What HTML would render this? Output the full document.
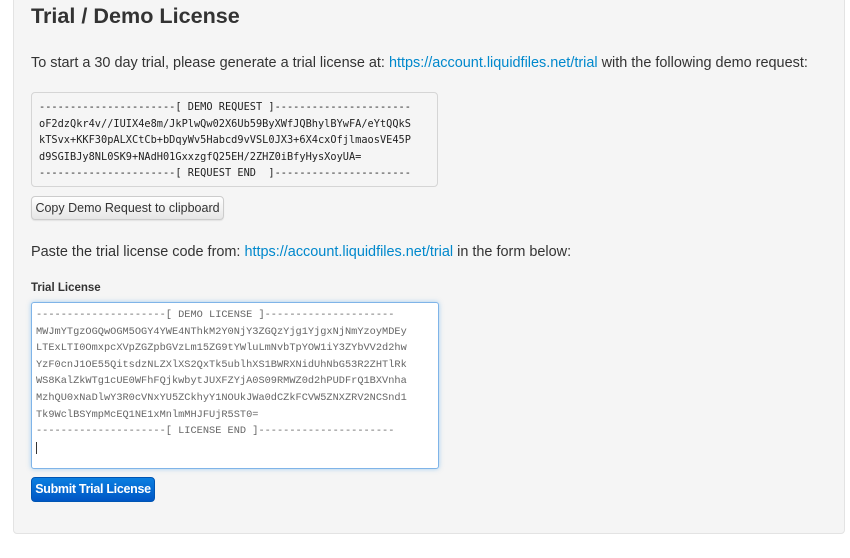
<!DOCTYPE html>
<html><head><meta charset="utf-8"><style>
body{margin:0;width:850px;height:558px;background:#fff;font-family:"Liberation Sans",sans-serif;color:#333;position:relative;overflow:hidden}
.panel{position:absolute;left:13px;top:-10px;width:832px;height:544px;background:#f5f5f5;border:1px solid #e3e3e3;border-radius:4px;box-sizing:border-box}
.abs{position:absolute;white-space:nowrap}
h1{position:absolute;left:31px;top:3px;margin:0;font-size:21.6px;font-weight:bold;color:#333}
a{color:#0088cc;text-decoration:none}
p{margin:0;font-size:14.45px;position:absolute;left:31px;white-space:nowrap}
pre{position:absolute;left:31px;top:92px;width:407px;height:95px;box-sizing:border-box;margin:0;padding:6px 0 0 7px;background:#f5f5f5;border:1px solid #d5d5d5;border-radius:4px;font-family:"DejaVu Sans Mono","Liberation Mono",monospace;font-size:10.3px;line-height:16.6px;color:#222}
.btn{position:absolute;left:31px;top:196px;width:193px;height:24px;box-sizing:border-box;border:1px solid #ccc;border-radius:4px;background:linear-gradient(#fff,#e6e6e6);font-size:12.5px;line-height:22px;text-align:center;color:#333;box-shadow:0 1px 1px rgba(0,0,0,.08)}
.ta{position:absolute;left:31px;top:302px;width:408px;height:167px;box-sizing:border-box;background:#fff;border:1px solid #7fb4e8;border-radius:3px;box-shadow:0 0 5px rgba(82,168,236,.5);padding:4px 0 0 4px;font-family:"Liberation Mono",monospace;font-size:10.3px;line-height:16.6px;color:#666;white-space:pre}
.sub{position:absolute;left:31px;top:477px;width:124px;height:25px;box-sizing:border-box;border:1px solid #0055b3;border-radius:4px;background:linear-gradient(#0b7fe0,#0056c5);color:#fff;font-size:12.5px;line-height:23px;text-align:center;font-weight:bold;letter-spacing:-0.3px}
</style></head><body>
<div class="panel"></div>
<h1>Trial / Demo License</h1>
<p style="top:55px">To start a 30 day trial, please generate a trial license at: <a>https://account.liquidfiles.net/trial</a> with the following demo request:</p>
<pre>----------------------[ DEMO REQUEST ]----------------------
oF2dzQkr4v//IUIX4e8m/JkPlwQw02X6Ub59ByXWfJQBhylBYwFA/eYtQQkS
kTSvx+KKF30pALXCtCb+bDqyWv5Habcd9vVSL0JX3+6X4cxOfjlmaosVE45P
d9SGIBJy8NL0SK9+NAdH01GxxzgfQ25EH/2ZHZ0iBfyHysXoyUA=
----------------------[ REQUEST END  ]----------------------</pre>
<div class="btn">Copy Demo Request to clipboard</div>
<p style="top:244px">Paste the trial license code from: <a>https://account.liquidfiles.net/trial</a> in the form below:</p>
<div class="abs" style="left:31px;top:282px;font-size:11.5px;font-weight:bold;color:#333">Trial License</div>
<div class="ta">---------------------[ DEMO LICENSE ]---------------------
MWJmYTgzOGQwOGM5OGY4YWE4NThkM2Y0NjY3ZGQzYjg1YjgxNjNmYzoyMDEy
LTExLTI0OmxpcXVpZGZpbGVzLm15ZG9tYWluLmNvbTpYOW1iY3ZYbVV2d2hw
YzF0cnJ1OE55QitsdzNLZXlXS2QxTk5ublhXS1BWRXNidUhNbG53R2ZHTlRk
WS8KalZkWTg1cUE0WFhFQjkwbytJUXFZYjA0S09RMWZ0d2hPUDFrQ1BXVnha
MzhQU0xNaDlwY3R0cVNxYU5ZCkhyY1NOUkJWa0dCZkFCVW5ZNXZRV2NCSnd1
Tk9WclBSYmpMcEQ1NE1xMnlmMHJFUjR5ST0=
---------------------[ LICENSE END ]----------------------
<span style="border-left:1px solid #333"> </span></div>
<div class="sub">Submit Trial License</div>
</body></html>
